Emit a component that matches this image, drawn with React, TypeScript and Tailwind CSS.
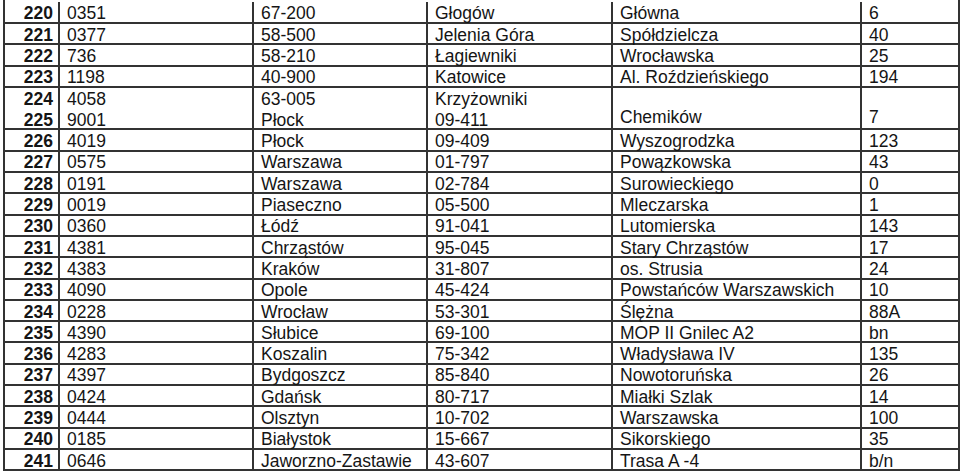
import React from "react";

type Row = { nr: string[]; cells: string[][]; double?: boolean };

const one = (nr: string, ...c: string[]): Row => ({ nr: [nr], cells: c.map((x) => [x]) });

const rows: Row[] = [
  one("220", "0351", "67-200", "Głogów", "Główna", "6"),
  one("221", "0377", "58-500", "Jelenia Góra", "Spółdzielcza", "40"),
  one("222", "736", "58-210", "Łagiewniki", "Wrocławska", "25"),
  one("223", "1198", "40-900", "Katowice", "Al. Roździeńskiego", "194"),
  {
    nr: ["224", "225"],
    cells: [
      ["4058", "9001"],
      ["63-005", "Płock"],
      ["Krzyżowniki", "09-411"],
      ["", "Chemików"],
      ["", "7"],
    ],
    double: true,
  },
  one("226", "4019", "Płock", "09-409", "Wyszogrodzka", "123"),
  one("227", "0575", "Warszawa", "01-797", "Powązkowska", "43"),
  one("228", "0191", "Warszawa", "02-784", "Surowieckiego", "0"),
  one("229", "0019", "Piaseczno", "05-500", "Mleczarska", "1"),
  one("230", "0360", "Łódź", "91-041", "Lutomierska", "143"),
  one("231", "4381", "Chrząstów", "95-045", "Stary Chrząstów", "17"),
  one("232", "4383", "Kraków", "31-807", "os. Strusia", "24"),
  one("233", "4090", "Opole", "45-424", "Powstańców Warszawskich", "10"),
  one("234", "0228", "Wrocław", "53-301", "Ślężna", "88A"),
  one("235", "4390", "Słubice", "69-100", "MOP II Gnilec A2", "bn"),
  one("236", "4283", "Koszalin", "75-342", "Władysława IV", "135"),
  one("237", "4397", "Bydgoszcz", "85-840", "Nowotoruńska", "26"),
  one("238", "0424", "Gdańsk", "80-717", "Miałki Szlak", "14"),
  one("239", "0444", "Olsztyn", "10-702", "Warszawska", "100"),
  one("240", "0185", "Białystok", "15-667", "Sikorskiego", "35"),
  one("241", "0646", "Jaworzno-Zastawie", "43-607", "Trasa A -4", "b/n"),
];

const widths = ["w-[194px]", "w-[174px]", "w-[185px]", "w-[249px]", "w-[96px]"];

export default function App() {
  return (
    <div
      className="w-[960px] h-[472px] bg-white overflow-hidden text-[#151515] text-[17.5px]"
      style={{ fontFamily: '"Liberation Sans", Arial, sans-serif' }}
    >
      <div className="ml-[3px] w-[957px] border-l-2 border-r-2 border-[#333]">
        {rows.map((r, i) => {
          const h = i === 0 ? "h-[24px] pt-[2px]" : r.double ? "h-[42.6px]" : "h-[21.3px]";
          return (
            <div key={r.nr[0]} className={`flex border-b-2 border-[#333] ${h}`}>
              <div className="w-[55px] shrink-0 border-r-2 border-[#333] pr-[5px] pt-[3px] text-right font-bold flex flex-col justify-center">
                {r.nr.map((n) => (
                  <div key={n} className="leading-[21px]">{n}</div>
                ))}
              </div>
              {r.cells.map((c, j) => (
                <div
                  key={j}
                  className={`${widths[j]} shrink-0 pl-[7px] pt-[3px] flex flex-col justify-center whitespace-nowrap ${
                    j < 4 ? "border-r-2 border-[#333]" : ""
                  }`}
                >
                  {c.map((t, k) => (
                    <div key={k} className="leading-[21px] h-[21px]">{t}</div>
                  ))}
                </div>
              ))}
            </div>
          );
        })}
      </div>
    </div>
  );
}
